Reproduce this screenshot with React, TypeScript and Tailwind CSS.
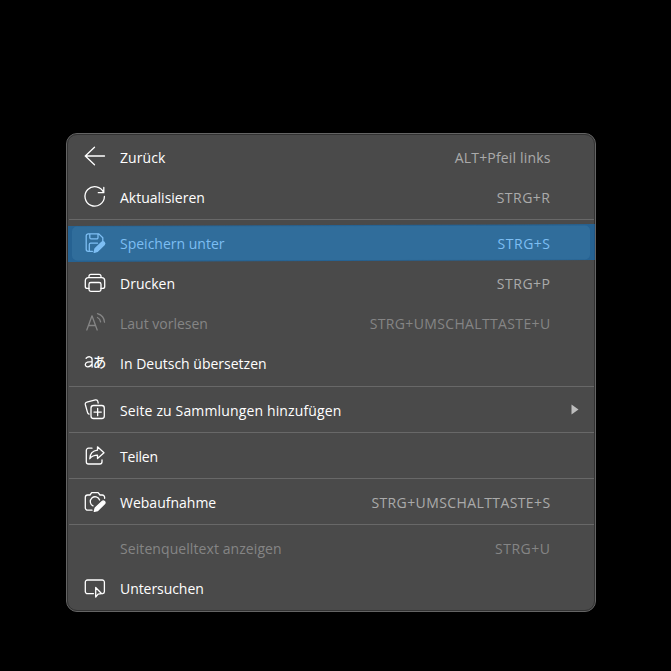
import React from "react";

type Item = {
  label: string;
  shortcut?: string;
  icon?: React.ReactNode;
  disabled?: boolean;
  active?: boolean;
  submenu?: boolean;
  labelClass?: string;
  shortcutClass?: string;
};

const Svg = ({ children }: { children: React.ReactNode }) => (
  <svg width="24" height="24" viewBox="0 0 24 24" fill="none" stroke="currentColor" strokeWidth="1.3" strokeLinecap="round" strokeLinejoin="round">
    {children}
  </svg>
);

const back = <Svg><path d="M21.500 11H2.200M11.500 2.300 2.300 11l9.200 8.700" /></Svg>;
const reload = <Svg><path d="M20.600 7.500A9.700 9.700 0 1 0 21.400 11.500M20.800 2.500v5.200h-5.500" /></Svg>;
const save = (
  <Svg>
    <path d="M9.500 20.300H5.200a2 2 0 0 1-2-2V4.900a2 2 0 0 1 2-2h10.600l4 3.900v3.500M6.800 3v3.600a1.200 1.200 0 0 0 1.200 1.200h5.800A1.200 1.200 0 0 0 15 6.600V3M6.300 20v-6.400a1.400 1.400 0 0 1 1.400-1.400h6.800" />
    <path d="m12 17.800 6.700-6.500a1.700 1.700 0 0 1 2.500 2.400l-6.700 6.700-3.400 1z" fill="currentColor" />
  </Svg>
);
const print = (
  <Svg>
    <path d="M6 17.400H4.300a2 2 0 0 1-2-2V9.700a3 3 0 0 1 3-3h13.400a3 3 0 0 1 3 3v5.700a2 2 0 0 1-2 2H18M6 6.500V5.300a2 2 0 0 1 2-2h8a2 2 0 0 1 2 2v1.200" />
    <rect x="6" y="11.500" width="12" height="8.800" rx="1.800" />
  </Svg>
);
const read = (
  <Svg><path d="M3.800 19 9 4.800 14.200 19M5.500 14.500h7M14.500 6.500c1.700.8 2.800 2.300 3.100 4.300M14.500 2.700c4 1.200 6.700 4.300 7 8.500" /></Svg>
);
const translate = (
  <Svg>
    <path d="M3.100 7.200c2-2.200 6-2 6 1.400V16M9.100 10.700c-3.500 0-6.800.2-6.800 2.800 0 3.300 4.800 3.100 6.800-.6" />
    <text x="9.700" y="16.300" fontSize="13.500" fill="currentColor" stroke="none" className="font-['Noto_Sans_CJK_JP',sans-serif] font-medium">あ</text>
  </Svg>
);
const collection = (
  <Svg>
    <path d="M6 16.200c-.9-.3-1.300-.9-1.500-1.800L2.300 6.500a2 2 0 0 1 1.500-2.400l8.600-2.200a2 2 0 0 1 2.400 1.500l.4 1.600" />
    <rect x="8" y="7.500" width="13.300" height="13" rx="2.500" />
    <path d="M14.650 10.500v7.200M11 14.100h7.300" />
  </Svg>
);
const share = (
  <Svg>
    <path d="M9 4.200H5.500a2.200 2.200 0 0 0-2.200 2.200v11.400A2.200 2.200 0 0 0 5.500 20h11.300a2.200 2.200 0 0 0 2.200-2.200v-2" />
    <path d="M14.500 2.800 21 8.700l-6.500 5.800v-3.300c-3.400 0-5.700 1-7.700 3.500.2-4.700 3-8 7.700-8.500z" />
  </Svg>
);
const capture = (
  <Svg>
    <path d="M9 20.200H4.800a2.500 2.500 0 0 1-2.500-2.500V7.300a2.300 2.300 0 0 1 2.300-2.300H7l1.700-2.400h6.400L17 5h2.300a2.300 2.300 0 0 1 2.300 2.300v1" />
    <path d="M10 15.900A4.800 4.800 0 1 1 16.600 10" />
    <path d="m12.200 18 6.900-6.600a1.700 1.700 0 0 1 2.400 2.400l-6.800 6.700-3.400.8z" fill="currentColor" />
  </Svg>
);
const inspect = (
  <Svg>
    <path d="M10.500 17.600H4.500a2.200 2.200 0 0 1-2.200-2.200V6.200A2.200 2.200 0 0 1 4.500 4h14.700a2.200 2.200 0 0 1 2.200 2.200v9.200a2.200 2.200 0 0 1-1.800 2.200" />
    <path d="M12.700 11.500v9.500l2.400-2.900 3.600-.4z" />
  </Svg>
);

const groups: Item[][] = [
  [
    { label: "Zurück", shortcut: "ALT+Pfeil links", icon: back, labelClass: "tracking-[0.1px]", shortcutClass: "tracking-[0.16px]" },
    { label: "Aktualisieren", shortcut: "STRG+R", icon: reload, shortcutClass: "tracking-[0.5px]" },
  ],
  [
    { label: "Speichern unter", shortcut: "STRG+S", icon: save, active: true, shortcutClass: "tracking-[0.5px]" },
    { label: "Drucken", shortcut: "STRG+P", icon: print, shortcutClass: "tracking-[0.5px]" },
    { label: "Laut vorlesen", shortcut: "STRG+UMSCHALTTASTE+U", icon: read, disabled: true, shortcutClass: "tracking-[0.36px]" },
    { label: "In Deutsch übersetzen", icon: translate },
  ],
  [{ label: "Seite zu Sammlungen hinzufügen", icon: collection, submenu: true, labelClass: "tracking-[0.14px]" }],
  [{ label: "Teilen", icon: share, labelClass: "tracking-[-0.2px]" }],
  [{ label: "Webaufnahme", shortcut: "STRG+UMSCHALTTASTE+S", icon: capture, shortcutClass: "tracking-[0.4px]" }],
  [
    { label: "Seitenquelltext anzeigen", shortcut: "STRG+U", disabled: true, labelClass: "tracking-[0.08px]", shortcutClass: "tracking-[0.5px]" },
    { label: "Untersuchen", icon: inspect, labelClass: "tracking-[-0.06px]" },
  ],
];

function Row({ item }: { item: Item }) {
  const main = item.active ? "text-[#7dbef3]" : item.disabled ? "text-[#858585]" : "text-white";
  const key = item.active ? "text-[#7dbef3]" : item.disabled ? "text-[#858585]" : "text-[#aaaaaa]";
  return (
    <div className="relative flex h-10 items-center pr-[43.5px] pb-[2px] pl-[15px]">
      {item.active && (
        <>
          <div className="absolute -right-px left-0 top-px h-[36px] -skew-y-[0.2deg] border-r border-[#1f5583] bg-[#266292]" />
          <div className="absolute left-1 right-1 top-[2px] h-[34px] -skew-y-[0.1deg] rounded-[5px] bg-[#306d9b]" />
        </>
      )}
      <div className={`relative mr-[13px] size-6 shrink-0 ${main}`}>{item.icon}</div>
      <span className={`relative ${main} ${item.labelClass ?? ""}`}>{item.label}</span>
      <span className={`relative ml-auto ${key} ${item.shortcutClass ?? ""}`}>{item.shortcut}</span>
      {item.submenu && (
        <svg className="absolute right-[15px] top-[13px]" width="8" height="11" viewBox="0 0 8 11">
          <path d="M0.500 0.500 7.500 5.500 0.500 10.500z" fill="#bdbdbd" />
        </svg>
      )}
    </div>
  );
}

export default function App() {
  return (
    <main className="h-[671px] w-[671px] overflow-hidden bg-black pt-[133px] pl-[66px]">
      <div className="h-[479px] w-[530px] rounded-[11px] border border-[#646464] bg-[#4a4a4a] font-['Open_Sans',sans-serif] text-[14px] whitespace-nowrap">
        <div className="h-full rounded-[10px] border border-[#323232] pt-[3px]">
          {groups.map((group, i) => (
            <React.Fragment key={i}>
              {i > 0 && (
                <div className={i === 2 ? "h-[7px] pt-[2px] pl-px" : "h-[6px] pt-px pl-px"}>
                  <div className="h-px bg-[#686868]" />
                </div>
              )}
              {group.map((item) => <Row key={item.label} item={item} />)}
            </React.Fragment>
          ))}
        </div>
      </div>
    </main>
  );
}
